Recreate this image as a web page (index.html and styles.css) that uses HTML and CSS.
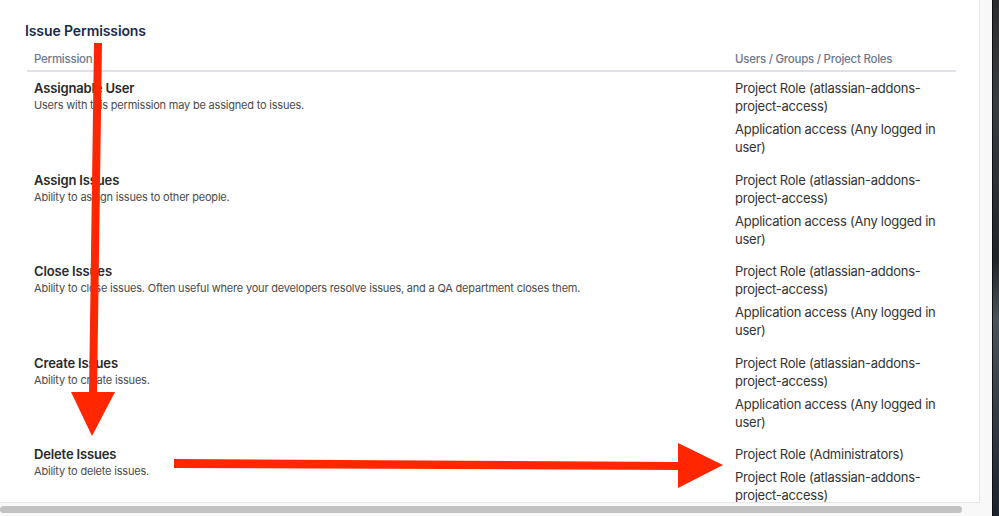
FILE: index.html
```html
<!DOCTYPE html>
<html lang="en">
  <head>
    <meta charset="UTF-8" />
    <title>Issue Permissions</title>
    <link rel="stylesheet" href="styles.css">
  </head>

  <body>
    <div class="vindue">
      <section class="panel">
        <h1>Issue Permissions</h1>
        <table>
          <thead>
            <tr>
              <th class="perm">Permission</th>
              <th>Users / Groups / Project Roles</th>
            </tr>
          </thead>
          <tbody>
            <tr>
              <td class="perm">
                <b>Assignable User</b>
                <span>Users with this permission may be assigned to issues.</span>
              </td>
              <td>
                <p>Project Role (atlassian-addons-project-access)</p>
                <p>Application access (Any logged in user)</p>
              </td>
            </tr>
            <tr>
              <td class="perm">
                <b>Assign Issues</b>
                <span>Ability to assign issues to other people.</span>
              </td>
              <td>
                <p>Project Role (atlassian-addons-project-access)</p>
                <p>Application access (Any logged in user)</p>
              </td>
            </tr>
            <tr>
              <td class="perm">
                <b>Close Issues</b>
                <span>Ability to close issues. Often useful where your developers resolve issues, and a QA department closes them.</span>
              </td>
              <td>
                <p>Project Role (atlassian-addons-project-access)</p>
                <p>Application access (Any logged in user)</p>
              </td>
            </tr>
            <tr>
              <td class="perm">
                <b>Create Issues</b>
                <span>Ability to create issues.</span>
              </td>
              <td>
                <p>Project Role (atlassian-addons-project-access)</p>
                <p>Application access (Any logged in user)</p>
              </td>
            </tr>
            <tr>
              <td class="perm">
                <b>Delete Issues</b>
                <span>Ability to delete issues.</span>
              </td>
              <td>
                <p>Project Role (Administrators)</p>
                <p>Project Role (atlassian-addons-project-access)</p>
              </td>
            </tr>
          </tbody>
        </table>
      </section>
      <div class="scrollbar"><div class="thumb"></div></div>
    </div>
    <div class="desk"></div>

    <!-- roede pile tegnet oven paa skaermbilledet -->
    <svg class="pile" width="999" height="516" viewBox="0 0 999 516">
      <polygon points="94,43 102,43 97,394 89,394" fill="#ff2600" />
      <polygon points="71,392 115,392 92,436" fill="#ff2600" />
      <polygon points="174,459 680,462 680,470 174,468" fill="#ff2600" />
      <polygon points="678,443 723,465 678,488" fill="#ff2600" />
    </svg>
  </body>
</html>
```

FILE: styles.css
```css
body {
  margin: 0;
  display: flex;
  width: 999px;
  height: 516px;
  overflow: hidden;
  background-color: #1d2127;
  font-family: "Inter", "Liberation Sans", sans-serif;
  position: relative;
}

.vindue {
  width: 992px;
  flex: none;
  display: flex;
  flex-direction: column;
  background-color: #f8f8f8;
}

.panel {
  width: 980px;
  height: 503px;
  overflow: hidden;
  background-color: white;
  border-right: 1px solid #e6e6e6;
  border-bottom: 1px solid #e6e6e6;
  padding-left: 25px;
  box-sizing: border-box;
}

h1 {
  font-size: 14px;
  font-weight: 600;
  line-height: 18px;
  color: #172b4d;
  margin: 22px 0 0 0;
  letter-spacing: -0.1px;
}

table {
  border-collapse: collapse;
  width: 929px;
  margin-left: 2px;
  margin-top: 2px;
}

th {
  text-align: left;
  font-size: 11.5px;
  font-weight: 500;
  color: #6b778c;
  line-height: 16px;
  letter-spacing: -0.25px;
  padding: 9px 7px 3px 7px;
  border-bottom: 2px solid #dfe1e6;
}

.perm {
  width: 687px;
}

td {
  vertical-align: top;
  padding: 7px 7px 7.5px 7px;
  font-size: 13px;
  line-height: 18px;
  letter-spacing: -0.25px;
  color: #333;
}

td b {
  display: block;
  font-weight: 600;
  color: #292929;
  letter-spacing: -0.15px;
}

td span {
  display: block;
  font-size: 11px;
  line-height: 14px;
  letter-spacing: -0.2px;
  padding-top: 1px;
  color: #4a4a4a;
}

td p {
  margin: 0 0 5px 0;
}

td p:last-child {
  margin-bottom: 0;
}

.scrollbar {
  height: 13px;
  padding-top: 3px;
  box-sizing: border-box;
}

.thumb {
  width: 962px;
  height: 7px;
  border-radius: 4px;
  background-color: #c2c2c2;
}

.desk {
  flex: 1;
  background: linear-gradient(#2a2b2c, #3a3d40 20%, #202328 50%, #4a525c 62%, #1c2230);
  border-left: 1px solid #0d0f12;
}

.pile {
  position: absolute;
  top: 0;
  left: 0;
}
```
